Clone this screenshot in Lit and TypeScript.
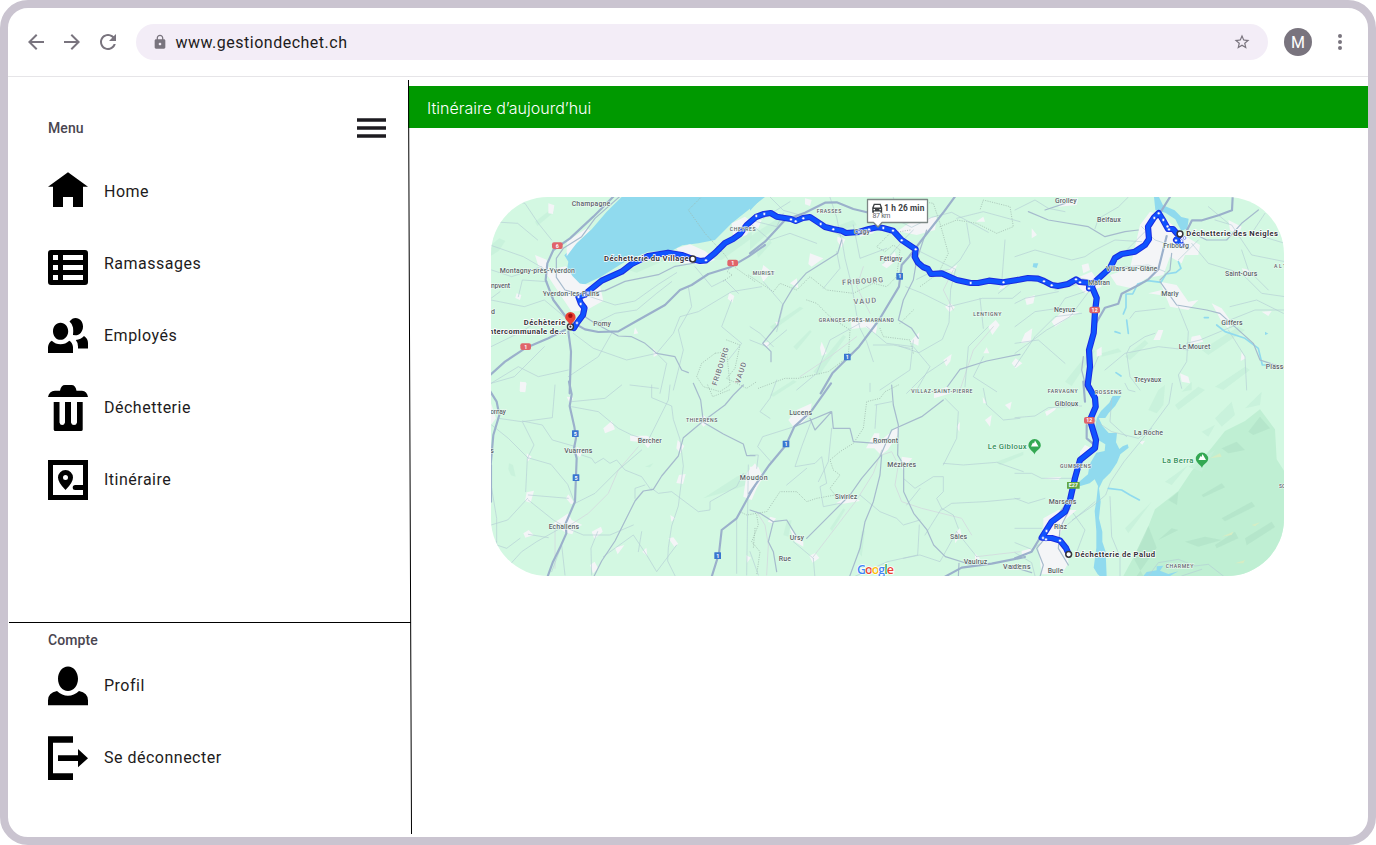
import { LitElement, html, svg, css } from "lit";
import { customElement } from "lit/decorators.js";

/* Each tile is drawn in its own 3x coordinate space, offset by (x, y). */
type Label = [number, number, number, string, string?, number?];
interface Tile {
  x: number;
  y: number;
  areas?: [string, string][];
  towns: string;
  highways?: string;
  main?: string;
  minor: string;
  faint?: string;
  borders?: string;
  streams?: string;
  labels: Label[];
  shields?: [number, number, string, string][];
}

const TILES: Tile[] = [
  {
    x: 485, y: 190,
    areas: [
      ["hill", "M18 165l25-20 18 8-20 30-23 14zM150 95l45-35 12 6-50 42zM430 240l90-42 30 8-95 42zM640 205l110-50 50-30v20l-90 65z"],
      ["water", "M840 21H410L365 65 320 118 262 172 238 196 250 215 246 240 262 262 276 280 300 283 345 262 420 215 490 185 560 182 592 166 640 160 690 150 740 100 790 60Z"],
    ],
    towns: "M190 40l18 6-4 26-14-2zM150 195l35 14 8 30 50-10 20 30 22 22 60 6 10 45-50 28-45 5-40-60-30-45-28-25zM575 175l40-12 45 20 30 26-35 15-60-5zM740 100l40-20 25 20-20 35-40 12zM733 308l15 10-6 20-14-12zM450 412l10 18-14 3zM505 475l15 18-14 8zM105 575l18 2-2 30-16-2zM95 310l14 5-4 15-14-6zM245 155l60-40 10 6-40 38-30 40z",
    highways: "M395 10L325 80 255 145 205 180 187 220 182 270 205 330 250 390 300 418 340 426 400 424 460 390 540 345 585 300 620 285 670 252 735 232 790 200 840 165M240 420L190 445 120 475 60 515 10 560M250 425l8 60-4 125",
    main: "M415 10L330 85 290 140 235 175 214 205 214 262 240 300 275 310 300 380 330 400 400 438 440 440 480 460 515 490 570 500 590 540 610 548M300 310l60-8 60-28 100-20 50-25 60-10",
    minor: "M60 25l60 15 40 60 40 50M18 95l80 5 60 50M20 145l-5 20 100 35 60 35M20 240l60 20 90-30M18 330l100 20 60-20 60 50M45 305l-27 20M300 315l90 30 60-12 70-50 55-35M330 400l60-30 65-10 60-50 45-35M150 400l-50 30-82 40M265 430l60 45 100 35 90-20 30 30-20 90M610 290l10 60-40 70 15 60-30 120M515 490l50-60 20-50 55-15 100-60 90-15M18 580l70-20 90-90M740 330l-30 80 60 50-40 50M100 320l12-50 75 5M380 430l-40 70-90 60M250 540l-90 20-60-30-82 50M630 230l50 60 40-20 40 40",
    borders: "M650 20l-40 40 50 70 60 65 20 30 70 50M745 215l-18 30 15 10-30 20M690 490l-40 30-15 40 20 30 50 15 30-20-10-100zM725 450l40 15-15 70-25 30 60 30 30-20",
    labels: [
      [260, 49, 116, "Champagne"], [44, 248, 226, "Montagny-près-Yverdon"],
      [18, 293, 57, "npvent"], [173, 318, 170, "Yverdon-les-Bains"], [18, 373, 15, "d"],
      [325, 409, 53, "Pomy"], [734, 122, 78, "CHEYRES", "caps"], [803, 256, 66, "MURIST", "caps"],
      [357, 213, 254, "Déchetterie du Village", "stop"], [116, 405, 125, "Déchèterie", "stop"],
      [12, 431, 232, "ntercommunale de...", "stop"],
      [695, 588, 118, "FRIBOURG", "region", -72], [764, 582, 66, "VAUD", "region", -72],
    ],
    shields: [[217, 167, "6", "red"], [743, 219, "1", "red"], [122, 470, "1", "red"]],
  },
  {
    x: 750, y: 190,
    areas: [["hill", "M0 140l90-60 30 4-70 50-50 45zM230 120l80-30 10 15-70 25zM20 190l40-40 5 8-40 45zM60 410l90-60 10 5-90 65zM190 545l90-110 8 5-80 115zM130 470l50-50 5 5-45 55z"], ["water", "M0 21h38L0 62z"]],
    towns: "M165 25l20 5-5 18-15-5zM0 95l35-5-10 25-25 5zM262 140l24 8-12 25-12-20zM180 190l40 15-35 25-10-8zM40 225l25 20-25 30-8-20zM120 280l20-15 5 30zM302 382l50 5 30 20-5 25-30-20-42 5zM215 455l15 35-15 8-5-25zM35 460l22-5-2 20zM75 395l14 2-8 9zM440 125l50-35 70-10-5 40-55 15-40-8zM395 225l40-40 5 25-30 25zM590 240l32-16-12 24zM585 350l16-10 14 12-16 15zM480 455l28-28-3 40zM580 510l25-18-4 22-12 15zM715 410l22-20 12 15-22 30zM700 490l10-18 8 18zM785 520l12-15 20 15-20 15zM330 120l50-12-10 22-40 10zM745 300l12-18 10 10zM678 95l22-15 5 15z",
    highways: "M0 190l45-35 60-65 60-22 60-30 35-1 50 20 50 12 60 2M622 10l-40 55-55 70-50 65-22 25-8 65-60 100-60 80-80 80-35 60",
    main: "M275 150l-12 40-95 60-40 45-30 50-15 60-45 55 25 25v30M530 120l-30 90-10 60-30 60-15 60 40 25 20 30M585 600l45-62 80-25 100-20",
    minor: "M60 21l40 40 70 20 110 60M0 90l80 20 20-40M240 22l20 60 12 60M120 35l-80 50M430 22l15 70 40 20 60-30 60-15 110 60M490 120l-30 30-60 70M620 85l80-20 110 30M650 100l10 60-30 50-30 28-60 10-40 20M497 178l120 60-15 60-5 100-20 50-70 40-60-20M597 350l-80-40-50-20M597 350l100-25 90 0 25-20M690 325l10 90M0 100l60 50 60-20 80 30M40 275l60 70-20 80M0 450l50 20 60-50M275 145l10 60 20 80 15 90 10 40 20 40 20 60M310 105l20 100 80-30M330 400l-90 50-40 100-60 50M350 410l60 50 80 10 50 60-40 70M490 450l-10 90-90 60M590 510l-60 40-60 60M715 410l-60 60-10 120M745 310l50-40M370 465h60l50 10M220 295l50-60-10-50M0 410l30 20 40 40M700 500l-30 60 70 45M765 150l-10 130",
    faint: "M340 230l-20 60 40 80M610 240l-30 60 30 60M730 410l-60 70-40 120M150 560l90-60 80-60",
    borders: "M470 75l10-45 70 10 20 60 25 90-30 60-55 40M480 120l-60 10-40 40 25 15 25-20 20 15-10 80-30 30-40-10-60 30-80-10-50-40-40 40-50-20-20 25-75-50M170 330l30 10 40 40 60 40-5 80-60 45-90 20-40 0-80 30M450 400l40-40M390 415l10 25 80 10 10 40M570 110l50-20 60 10 60 30 50-20-10-60-80-20-10 30",
    labels: [
      [200, 70, 74, "FRASSES", "caps"], [312, 132, 48, "Cugy"], [389, 213, 68, "Fétigny"],
      [8, 256, 64, "MURIST", "caps"], [206, 396, 226, "GRANGES-PRÈS-MARNAND", "caps"],
      [670, 377, 84, "LENTIGNY", "caps"], [277, 285, 123, "FRIBOURG", "region", -4],
      [311, 343, 68, "VAUD", "region", -4],
    ],
    shields: [[449, 259, "1", "blue"], [292, 501, "1", "blue"]],
  },
  {
    x: 1015, y: 190,
    areas: [
      ["hill", "M150 575l80-100 10 8-70 105zM330 500l60-50 10 10-55 50zM560 480l110-70 20 10-110 75zM260 490l50-15 10 10-60 15zM600 590l90-60 15 10-80 60z"],
      ["water", "M417 21l15 0 12 25 35 15 20 20 22 5-4 30-18 6-8-14-10-20-30-20-30-8zM55 220l15 0-5 14-12-3zM750 425l10 6-10 4z"],
    ],
    towns: "M135 25l55 0-5 20-55 5zM375 105l30-40 40 15 60 55 50 30-5 30-40 0-10 25-35-20-20 55-50 10-45 30-45-10-20-30 60-20zM435 275l50 10 35 50 30-5-30 30-55-10zM140 365l55 0-45 25-30 20-10-15zM30 430l22-15-5 40-30 5zM30 325l30-10-5 25-20 5zM590 340l30 15 25 35-5 25-20-20zM640 90l40 20-10 25-25-15zM430 420l15 0-10 30-20 0zM740 365l30-2-10 15zM530 440l25-5 10 20-40 10zM680 485l12 20-15 8zM170 270l60-25 30 45-50 20zM50 115l16 20-16 10zM200 225l20-5 5 20-20 10zM495 550l25 10 5 20-25-5zM245 480l15-10 0 25-15 5zM400 310l40-10-5 15zM680 235l25 5-10 25z",
    highways: "M465 21l-25 40M653 21l-2 40-40 15-50 15-30 0-15 30M240 405l30-52 40-12 10-30 50-25 30-18 30-30 15-60 10-40",
    main: "M515 120l60 30 60 0 45-50 50-40M435 275l50 70 90 15 40 10 100 90 20 50 60 20M470 190l-5 50-30 30M215 600l-15-60 5-40M90 60l60-20M40 65l60 25 120 20 50 30 60-15 40-5",
    minor: "M340 21l-30 30-60 35-10 30M0 60l60-30 40 25 50 10M0 200l60-20 110 30 40-10 30-20 60-30 80 5M180 260l40 10M120 300l80-20M0 410l60-45 70-10 20-30 60-20M0 530l60-90 60-60 80-10M0 340l30-15 100-20M380 110l40 40 30 10M530 160l50 60 100 30 60 60 70 10M680 180l20 60 60 60M600 90l50 15 60 90 100 20M640 100l-60-50M490 350l30 75-5 90-25 40 10 40M515 460l40-10 120-50M345 470l-10 20 10 70 30 40M345 470l45-30 30-10M345 385l15-20 90-10M645 350l80-20 80 40M620 400l100-40 90 0M640 420l50 80 5 100M225 300l-60 80-70 40-95 70M250 500l-30 70M270 540l60-50 100-20 90 10M490 210l60-60M280 235l120-10 50 20M300 215l90-90M750 70l-40 60 100 30M0 460l70-10 80 70",
    streams: "M490 215l8 20-15 12-30 5-15 25-40-5-30 10-15 30-20 0 0 40-8 20M605 405l25 20 60 20 40 30 12 50 18 0M300 425l15 5M568 383l12 0M303 548l15 10M335 390l5 40",
    labels: [
      [120, 39, 65, "Grolley"], [246, 96, 71, "Belfaux"], [445, 174, 77, "Fribourg"],
      [273, 244, 154, "Villars-sur-Glâne"], [220, 284, 65, "Matran"], [439, 317, 52, "Marly"],
      [630, 259, 97, "Saint-Ours"], [117, 365, 64, "Neyruz"], [619, 404, 64, "Giffers"],
      [491, 476, 95, "Le Mouret"], [357, 577, 82, "Treyvaux"], [752, 538, 65, "Plasse"],
      [777, 233, 50, "ALTE", "caps"], [514, 139, 275, "Déchetterie des Neigles", "stop"],
    ],
    shields: [[239, 360, "12", "red"]],
  },
  {
    x: 485, y: 385,
    areas: [["hill", "M72 235l12 5 8 35-14-4-8-18zM655 340l100-65 50-20-20 45-60 20zM480 245l25-10-10 12z"]],
    towns: "M105 -5l20 0-5 25-16-2zM355 130l25-22 10 25-30 12zM435 152l50 0 22 10-18 28-15-18-38-4zM640 105l15-15 20 20-20 15zM578 165l20 18-12 22-12-15zM582 270l20-3-8 30-20-3zM245 35l20 3-10 18zM275 185l20 10-10 22-12-10zM125 205l15 10-12 15zM125 322l22-5-10 36-17-5zM250 328l18 25-10 5-15-18zM205 415l45-30 10 20 32 15-22 8-8 20-20-5-20-15zM115 445l16-10 15 15-25 8zM320 440l28-15 5 15-25 22zM390 488l28-8-20 28zM472 500l12-12 3 25zM315 540l14-10 10 20-15 16zM550 460l15-3 15 20-12 8zM556 390l15 10-12 10zM785 265l25-30 25 40-20 35-15 35-25-10zM783 510l15 8-12 15zM18 55l15 45-15 20z",
    highways: "M252 -10l8 38-6 35 14 62 5 35-6 30 8 30-5 130-28 65 2 30-20 45-20 40-18 50M10 10l25 40 8 40-18 60-8 90M810 300l-25 45-30 55-45 35-8 70-25 80M18 240v110",
    main: "M625 -5l22 50 8 65M775 0l-30 30-25 30-65 48-60 50-15 55-50 60-25 40-30 5-25 30-60 120-40 60-25 50-15 25M655 112l60 35 60 30 10 35h25",
    minor: "M260 50l100-10 50-40M260 65l80 15 60 50 40 20 50 15 60-120 5-45M210 0l-8 98-90 12 35 70-20 40-5 100M110 110l-70-10M112 108l60 12 30 45 70 20M128 218l70 20 50 60 20 52M20 120l50 40 60 60M130 345l75 60 35 20M130 330l120 10M18 420l50-15 60-65M35 470l-60 30M270 355l60-30 70-70 70-60M290 210l30 10 10 15 25-15 20 15 20-10 25 30 50 20 28 40M500 310l20 15 40-5 80 60 35-5v-25l80-45 20-40M500 0v38l60 25 5 40 20 60 10 80-15 120-20 60-10 65-2 40 35 70M235 425l60 25h80l70-30M235 425l-80 45-45 30-50 55M130 448l60 10M320 570l-2-80 20-50M355 515l90-65 40 60 30 50 60-80M435 0l85 10M200 560l30-80 10 90M470 440l-10 60M755 405v160M790 240l-5 330M20 310l15 90v80l30 10 40-30M480 300l-30 10v30",
    faint: "M240 430l70-45 60-60 30-70 60-70M210 420v130",
    borders: "M668 0l15 35 50-20M810 430l-5 60",
    labels: [
      [16, 86, 47, "ornay"], [458, 174, 72, "Bercher"], [238, 204, 84, "Vuarrens"],
      [191, 433, 91, "Echallens"], [764, 286, 84, "Moudon"], [603, 110, 94, "THIERRENS", "caps"],
      [16, 203, 10, "s"],
    ],
    shields: [[271, 146, "5", "blue"], [273, 278, "5", "blue"], [698, 512, "1", "blue"]],
  },
  {
    x: 750, y: 385,
    areas: [["hill", "M100 450l10-40 15-5-10 50zM325 500l10-60 10-5-10 80zM60 30l70-45 10 5-70 45zM240 430l40-60 6 4-40 64zM740 230l80-30v10l-70 30z"]],
    towns: "M115 105l25-30 45-20-5 35-25 25-25 10zM348 190l25-45 15 0 0 25 60-50-5 30-30 45-20 15-20-20zM455 215l32 5-30 35zM552 20l40-15 10 20-50 15zM258 355l40-25 20 8 12 10-60 10zM60 395l18 5-10 15-14-5zM120 430l40 40 0 15-25-15zM178 512l18-8 12 15-20 14zM615 445l15-15 5 20-20 25zM705 105l20-15-5 35zM765 60l20-10-5 25zM698 35l12 20-10 0zM620 125l10-15-2 30zM675 505l15 15-15 12zM0 245l25 0 15 35-20 10-20 30z",
    highways: "M243 -5l-60 85-50 45-25 55-50 60-60 85M585 575l50-27 90-12 100-20",
    main: "M133 125l50-20 60-25M170 460l60-60 70-70 35-50 55-65 35-80 90-40 65-50M395 210l-5 60-20 80-25 60-15 80-35 95M425 0l5 60 15 60-2 90 18 30v80l30 65 40 50 20 45 35 35 80 25M0 375l30 10 40 25-15 60 15 30 10 60M180 100l15 35 50-55 5 50h50l10 40 70 5 35-15M70 410l40-5 30 50M625 575l2-40",
    minor: "M60 100l-30-20 30-40 20-55M133 125l-95 30-15 30 40 45M185 105l-30 80-20 60 60-10 20-20 15 80-20 10 10 60 50-10M245 130l-10 100-30 60M360 20l0-25M380 60l-5 70M375 60l50-10M460 280l35 30 55-35 30 0 0 45-20 20 15 30-50 80M580 235l60 5 100-8 80 28M580 240l40-80 5-80-40-40M575 370l35 20 15 40M575 375l30-20 100-5 105-10M470 360l40-50M330 330l60 50 50 20 20 20 50-15M508 420l-5 90-90 20-100 45M620 440l-50 90-60-20-50 10M620 440l60 75M190 520l-60-50M190 520l5 60M700 10l10 50 50 45 50-5M0 500l25 70M0 210l25 0-5 40M110 300l60-50",
    faint: "M190 515l130-170 50-80 25-70M395 210l30-10 20 40-10 60 20 50 60 20 120 30 30 50M680 515l130-15M20 380l25 40 10 60-5 90",
    borders: "M445 0l-40 20-15 20-40 10-10 80-30 45-40 25-30 25 10 30 20 15-30 40 15 20-55 10-30 10-30-30-50 0-40 60-60 10-20-10M20 390l5 30-20 50 25 30-10 70",
    labels: [
      [484, 24, 183, "VILLAZ-SAINT-PIERRE", "caps"], [118, 90, 68, "Lucens"],
      [369, 173, 75, "Romont"], [412, 246, 86, "Mézières"], [254, 343, 68, "Siviriez"],
      [119, 464, 43, "Ursy"], [86, 528, 37, "Rue"], [600, 461, 51, "Sâles"],
      [641, 537, 71, "Vaulruz"], [759, 551, 83, "Vuadens"], [713, 193, 117, "Le Gibloux", "peak"],
    ],
    shields: [[108, 177, "1", "blue"]],
  },
  {
    x: 1015, y: 385,
    areas: [
      ["mount", "M325 573l60-110 35-90 70-55 40-60 60-70 40-50 60-30 45-35 45 60 5 90 35 55v400z"],
      ["mount2", "M385 573l-30-55 45-95 25 65-60 85zM470 430l20 5-60 30zM620 190l45-20 25 25-50 10zM700 140l35-45 30 35-50 20zM560 330l60-35 10 12-65 30zM620 400l90-50 10 14-90 45zM510 470l60-15 50 10-70 20zM690 460l80-50 10 16-85 55zM460 345l30-25-4 40zM600 480l60-40 10 20-65 30z"],
      ["hill", "M400 75l30-60 20-15-5 60-20 25zM480 60l70-55 20 10-80 60zM600 100l50-50 10 40-40 35zM560 140l40-20-20 35zM450 290l70-50-50 60zM330 430l80-80-70 95zM690 70l50-50-5 40zM520 245l80-50-40 65zM500 20l30-30 0 25z"],
      ["sand", "M585 220l30-15 5 10zM710 420l25-8-15 12zM620 455l35-15-5 10zM660 535l30-10-5 10z"],
      ["water", "M318 33l-25 0-10 20-25 25-12 20-5 25 5 40 25 15-2 20-25 5-20 35-5 30-30 25 0 12 35-10 15-12 10 20-5 45-5 30 5 60 0 50-8 60 12 20 15 12 12-5-3-75-10-30 0-30-10-40 5-50-5-40 12-25 22-22 20-30 10-25 25-20-3-10-15 6-10 8-10-20 3-28-25 0-18-20-12-25 20 0 10-15 20-22zM385 573l10-12 30-5 0-12 20-2-10 15 25 10 30-8-25 14z"],
    ],
    towns: "M195 200l15-20 20 10-15 25-20 10zM90 80l35-15-5 10-25 18zM80 280l60-5-10 10zM85 400l45-25 55 0-35 30-20 60 30 30 0 40-20 33h-60l-10-80 15-50zM372 170l18-3-8 12zM240 15l10 0 15 10-20 12zM20 498l30-8-10 20-20 0z",
    highways: "M0 520l50-20 30-50 50-60 30-40M205 -10l5 60M215 120v40l30 25",
    main: "M90 460l-25 30 20 50-10 35M165 370l-30 60-5 60 30 50M0 548l50 15",
    minor: "M472 -5l-10 60-55 75-35 45-45 55-40 60-15 40-35 30-65 45M285 335l5 120 25 60 0 60M0 98l60-5 40-25 100-5M0 265l50 0 30 15 90 0M0 340l40 15 50-15M0 430l80 0M230 100l60 40 80 20 40-30M330 -5l10 20 20 5M400 573l30-40 60-10 50 20 40-5 45 35M60 573l-10-40-50-30M0 473l50 20 30-20M175 385l35 50-30 80M240 350l-90 75M290 40l-5 70 50 45M500 573l60-20",
    streams: "M280 310l40 5 25 15 28 15",
    labels: [
      [98, 24, 90, "FARVAGNY", "caps"], [240, 27, 79, "ROSSENS", "caps"], [119, 62, 71, "Gibloux"],
      [357, 149, 87, "La Roche"], [135, 250, 93, "GUMEFENS", "caps"], [101, 358, 83, "Marsens"],
      [117, 431, 39, "Riaz"], [98, 563, 47, "Bulle"], [452, 550, 83, "CHARMEY", "caps"],
      [-20, 551, 67, "adens"], [442, 233, 93, "La Berra", "peak"], [792, 309, 30, "SCH", "caps"],
      [180, 517, 240, "Déchetterie de Palud", "stop"],
    ],
    shields: [[223, 106, "12", "red"], [175, 301, "E27", "green"]],
  },
];

const ROUTES = [
  "570.3 326.7 574 328 577 323 583 315 584.5 308 580.7 303 578.5 297 585 294.7 588 291.7 601.7 280.7 621.7 271.7 631.7 264 648 256 668 252.7 681.7 255 692.7 259 700 261 706 260.3 715 253 725 243 733 239 740 234 746.7 225 756 217 764 214 770.7 213 776.7 216.7 791 219 795.7 221 803 218 810 217 820.7 224 825 227 833 229 841.7 230.7 846 233 859 232 869 229 877.7 227.3 883 228 893 230.7 901.7 240 915.7 249.3 914.7 256.7 918 262.7 923 267 928 269 931 274 941.7 273.3 956.7 280 970.7 283 978 283 989 280.7 1003 282.3 1020 279.5 1028 278 1038 278.7 1044 281 1051.7 285 1058 286 1068 284 1076 279.5 1080 282 1090 283 1089 288.5 1095 281.7 1110 268 1115 258 1121.7 254 1135 251.7 1145 245 1149 239 1148 226.7 1154 217.5 1158.7 213 1163 220 1168 229 1173 229 1179 236 1176 240 1181.7 245",
  "1089 287 1092 287 1096.7 298 1095 311.7 1093.7 333 1089 350 1090 366.7 1087.7 385 1095 398 1095.7 406.7 1090 420 1096 440 1095 448 1080 460 1075 478 1070 500 1065 511.7 1051.7 521.7 1041.7 537.7 1051.7 538 1060 540.5 1066 548 1068.7 554",
];

const DOTS = [
  [577, 323], [580.7, 304], [578.5, 297], [584.5, 295], [588, 293], [706, 260.3], [756.3, 216], [764.3, 214],
  [791, 219.5], [795.7, 221.3], [803.3, 218.3], [820.7, 224], [833.3, 229.3], [859, 232], [869, 229.5],
  [883.3, 228], [893, 230.7], [901.7, 240.3], [915.7, 249.3], [970.7, 283], [1003.5, 282.3],
  [1044, 281.3], [1051.7, 285.3], [1076, 279.3], [1080, 282.3], [1089, 288.5], [1154.3, 218], [1158.7, 213.3],
  [1163.3, 220], [1167.5, 226.5], [1169, 229.5], [1184.5, 238], [1176, 240.5], [1181.7, 241], [1181.7, 245],
  [1046.5, 531], [1043, 538], [1046, 539.5], [1060, 540.7],
];

const STOPS = [[692.7, 259], [1180, 234], [1068.7, 554.3]];

const NAV = [
  ["Home", "M20 17.3L40 31.8H35V52H25V42H15V52H5V31.8H0Z"],
  ["Ramassages", "M3 23H37Q40 23 40 26V55Q40 58 37 58H3Q0 58 0 55V26Q0 23 3 23ZM5 28V33H10V28ZM15 28V33H35V28ZM5 38V43H10V38ZM15 38V43H35V38ZM5 48V53H10V48ZM15 48V53H35V48Z"],
  ["Employés", "M12.5 23.7C17 23.7 20.2 27.5 20.2 32.2S17 40.8 12.5 40.8 5 37 5 32.2 8 23.7 12.5 23.7ZM0 54V48Q.5 43.5 3.8 41.7 7.500 45.300 12.500 45.300 17.500 45.300 21.300 41.700 24.500 43.500 25 48V54ZM21.500 22.500C23.500 20 25.300 19 27.500 19 32 19 35 22.800 35 27.500 35 32.800 31.500 36.300 27.300 36.300L25 36Q25.500 32 25 28.500 24 24.500 21.500 22.500ZM27.800 41Q33 40.500 36 37 40 39.500 40 44V49.600H30V47.500Q30 43.500 27.800 41Z"],
  ["Déchetterie", "M0 26Q1 20 7 19.700H12Q13 14 17 14H23.500Q27.500 14 28.500 19.700H34Q39 20 40 26ZM5.700 31H11.500V51.500Q12 54 14.200 54T17 51.500V31H23V51.500Q23.500 54 26 54T29 51.500V31H34.700V58.500Q34.700 60 33 60H7.500Q5.700 60 5.700 58.500Z"],
  ["Itinéraire", "M0 17H40V57H0ZM5 22V52H35V47H27.200A2.500 2.500 0 0 1 27.200 42H35V22ZM17.500 27A7.500 7.500 0 0 1 25 34.500Q25 39.500 17.500 47 10 39.500 10 34.500A7.500 7.500 0 0 1 17.500 27ZM17.500 32A2.500 2.500 0 1 0 17.500 37 2.500 2.500 0 1 0 17.500 32Z"],
];

const ACCOUNT = [
  ["Profil", "M20 17.400C25.600 17.400 30 22.900 30 29.700S25.600 42 20 42 10 36.500 10 29.700 14.400 17.400 20 17.400ZM0 56.300V51.500Q0 43.500 9 42 14 46.800 20 46.800T31 42Q40 43.500 40 51.500V56.300Z"],
  ["Se déconnecter", "M0 15.300H25V21.700H5V52.200H25V59H0ZM10 34.200H30V28L40 37.200 30 46.300V40H10Z"],
];

@customElement("route-map")
export class RouteMap extends LitElement {
  static styles = css`
    :host { display: block; width: 793px; height: 379px; border-radius: 57px; overflow: hidden; background: #d3f8e2; }
    svg { display: block; }
    path, polyline { fill: none; stroke-linejoin: round; stroke-linecap: round; }
    .hill { fill: #c6f0d9; opacity: .75; }
    .mount { fill: #bfefd3; }
    .mount2 { fill: #b1e2c7; opacity: .7; }
    .sand { fill: #dcecc0; opacity: .8; }
    .water { fill: #90daee; }
    .towns { fill: #f4f5f7; }
    .minor { stroke: #b4cdd4; stroke-width: 2.4; opacity: .8; }
    .faint { stroke: #d3dfdf; stroke-width: 3; }
    .main { stroke: #a6bbcd; stroke-width: 3.6; }
    .highway { stroke: #9bb0cb; stroke-width: 6.500; }
    .border { stroke: #9db8ad; stroke-width: 2.200; stroke-dasharray: 1 6; }
    .stream { stroke: #90daee; stroke-width: 5; }
    text { font-family: Roboto, "Liberation Sans", sans-serif; }
    .label { font-size: 21px; font-weight: 500; fill: #5a6267; stroke: #f1fcf6; stroke-width: 3px; paint-order: stroke; }
    .caps { font-size: 15.500px; }
    .region { font-size: 22px; fill: #6f787d; }
    .peak { font-size: 23px; fill: #2f8f56; }
    .stop { font-size: 23px; font-weight: 700; fill: #35333a; stroke: #fff; stroke-width: 4px; }
    .route-edge { stroke: #1a2be0; stroke-width: 6.200; }
    .route { stroke: #0f53ff; stroke-width: 4.200; }
    .shield { font-size: 16px; font-weight: 700; fill: #fff; text-anchor: middle; }
    .red { fill: #e0646a; } .blue { fill: #3a76cf; } .green { fill: #64a744; }
    .logo { font-family: "Open Sans", Roboto, sans-serif; font-size: 12.500px; font-weight: 600; stroke: #fff; stroke-width: 1.500px; paint-order: stroke; }
    .time { font-size: 8.300px; font-weight: 700; fill: #3c4043; }
    .km { font-size: 7px; fill: #5f6368; }
  `;

  private layer(t: Tile, body: unknown) {
    return svg`<g transform="translate(${t.x} ${t.y}) scale(.33333)">${body}</g>`;
  }

  private pin(x: number, y: number, size: number, color: string) {
    return svg`<path d="M${x} ${y}c-.6-2.700-${size}-5-${size}-${size + 3}a${size} ${size} 0 0 1 ${size * 2} 0c0 4-${size - 0.6} 5.700-${size} ${size + 3}z" style="fill:${color}"/>`;
  }

  render() {
    return html`<svg width="793" height="379" viewBox="491 197 793 379">
      ${TILES.map((t) => this.layer(t, (t.areas ?? []).map(([c, d]) => svg`<path class=${c} d=${d} />`)))}
      ${TILES.map((t) => this.layer(t, svg`
        <path class="towns" d=${t.towns} />
        <path class="border" d=${t.borders ?? ""} />
        <path class="faint" d=${t.faint ?? ""} />
        <path class="minor" d=${t.minor} />
        <path class="stream" d=${t.streams ?? ""} />
        <path class="main" d=${t.main ?? ""} />
        <path class="highway" d=${t.highways ?? ""} />`))}
      ${ROUTES.map((p) => svg`<polyline class="route-edge" points=${p} />`)}
      ${ROUTES.map((p) => svg`<polyline class="route" points=${p} />`)}
      ${TILES.map((t) => this.layer(t, svg`
        ${(t.shields ?? []).map(([x, y, s, c]) => {
          const w = c === "blue" ? 20 : c === "green" ? 38 : 32;
          return svg`<rect class=${c} x=${x - w / 2} y=${y - 10} width=${w} height="20" rx=${c === "red" ? 6 : 1} /><text class="shield" x=${x} y=${y + 6}>${s}</text>`;
        })}
        ${t.labels.map(([x, y, w, s, c, r]) => svg`<text class="label ${c ?? ""}" x=${x} y=${y} textLength=${w} transform="rotate(${r ?? 0} ${x} ${y})">${s}</text>`)}`))}
      ${DOTS.map(([x, y]) => svg`<circle cx=${x} cy=${y} r="1.400" fill="#fff" stroke="#1a40e8" stroke-width=".5" />`)}
      ${STOPS.map(([x, y]) => svg`<circle cx=${x} cy=${y} r="2.900" fill="#fff" stroke="#35333a" stroke-width="1.500" />`)}
      <circle cx="570.400" cy="326.700" r="3" fill="#fff" stroke="#35333a" stroke-width="1.400" />
      <circle cx="570.400" cy="326.700" r="1.100" fill="#35333a" />
      ${this.pin(570.4, 325.5, 5.2, "#ea4335")}
      <circle cx="570.400" cy="315.800" r="2.200" fill="#a50e0e" />
      ${this.pin(1034.600, 454.500, 6.200, "#34a853")}
      <path d="M1031 446.500l2-4 1 1 1-3 3.500 6z" style="fill:#fff" />
      ${this.pin(1202, 468, 6.200, "#34a853")}
      <path d="M1198.500 460l2-4 1 1 1-3 3.500 6z" style="fill:#fff" />
      <path d="M867.500 199.500H927.500V222.500H882L878 227 873.500 222.500H867.500Z" style="fill:#fff;stroke:#7d8785;stroke-width:1.300" />
      <path d="M873.800 203.800h6.800l1.600 4v5h-1.800v-1.300h-6.400v1.300h-1.800v-5zM874.700 205l-.9 2.500h6.800l-.9-2.500zM873.500 209v1.300h1.500V209zm5.900 0v1.300h1.500V209z" style="fill:#3c4043;fill-rule:evenodd" />
      <text class="time" x="884.300" y="210.700" textLength="40">1 h 26 min</text>
      <text class="km" x="872.500" y="218.300" textLength="18">87 km</text>
      <text class="logo" x="857" y="573.500" textLength="37"><tspan fill="#4285f4">G</tspan><tspan fill="#ea4335">o</tspan><tspan fill="#fbbc05">o</tspan><tspan fill="#4285f4">g</tspan><tspan fill="#34a853">l</tspan><tspan fill="#ea4335">e</tspan></text>
    </svg>`;
  }
}

@customElement("app-root")
export class AppRoot extends LitElement {
  static styles = css`
    :host { display: block; background: #fff; font-family: Roboto, "Liberation Sans", sans-serif; color: #1d1b20; }
    .window { box-sizing: border-box; width: 1376px; height: 845px; border: 8px solid #cac4d0; border-radius: 28px; background: #fff; overflow: hidden; display: flex; flex-direction: column; }
    .toolbar { height: 68px; flex: none; display: flex; align-items: center; padding: 0 16px; border-bottom: 1px solid #e6e5e8; fill: #79747e; }
    .tool { width: 24px; height: 24px; margin-right: 12px; }
    .address { flex: 1; height: 36px; margin-left: 4px; padding: 0 17px 0 15.500px; border-radius: 18px; background: #f3edf7; display: flex; align-items: center; font-size: 16px; letter-spacing: .5px; }
    .toolbar .tool:first-child { margin-left: 0; }
    .lock { width: 16px; height: 16px; margin-right: 8px; }
    .url { flex: 1; }
    .star { width: 18px; height: 18px; }
    .avatar { width: 28px; height: 28px; margin: 0 16px; border-radius: 50%; background: #79747e; color: #fff; display: flex; align-items: center; justify-content: center; font-size: 16px; }
    .more { width: 24px; height: 24px; }
    .content { flex: 1; display: flex; min-height: 0; position: relative; }
    .sidebar { width: 400px; flex: none; display: flex; flex-direction: column; }
    .section { padding: 24px 22px 0 40px; }
    .primary { height: 521px; }
    .account { border-top: 1px solid #000; margin: 0 -3px 0 1px; padding: 8px 22px 0 39px; }
    .heading { height: 54px; display: flex; align-items: center; justify-content: space-between; font-size: 14px; font-weight: 500; letter-spacing: .1px; color: #49454f; }
    .account .heading { height: 18px; }
    .burger { width: 29px; height: 20px; fill: #1d1b20; }
    .item { height: 72px; display: flex; align-items: center; gap: 16px; font-size: 16px; letter-spacing: .5px; }
    .icon { width: 40px; height: 72px; flex: none; fill: #000; fill-rule: evenodd; }
    .main { flex: 1; padding-top: 9px; }
    .title { height: 42px; padding: 1px 0 0 19px; box-sizing: border-box; background: #090; color: #fff; display: flex; align-items: center; font: 300 16px Inter, "Liberation Sans", sans-serif; }
    .map { margin: 69px 0 0 83px; }
    .rule { position: absolute; left: 398px; top: 3px; width: 8px; height: 754px; }
  `;

  private items(list: string[][]) {
    return list.map(([name, d]) => html`<div class="item">
      <svg class="icon" viewBox="0 0 40 72"><path d=${d} /></svg><span>${name}</span>
    </div>`);
  }

  render() {
    return html`<div class="window">
      <div class="toolbar">
        <svg class="tool" viewBox="0 0 24 24"><path d="M20 11H7.830l5.590-5.590L12 4l-8 8 8 8 1.410-1.410L7.830 13H20z" /></svg>
        <svg class="tool" viewBox="0 0 24 24"><path d="M12 4l-1.410 1.410L16.170 11H4v2h12.170l-5.580 5.590L12 20l8-8z" /></svg>
        <svg class="tool" viewBox="0 0 24 24"><path d="M17.650 6.350C16.200 4.900 14.210 4 12 4c-4.420 0-7.990 3.580-7.990 8s3.570 8 7.990 8c3.730 0 6.840-2.550 7.730-6h-2.080c-.82 2.330-3.040 4-5.650 4-3.310 0-6-2.690-6-6s2.690-6 6-6c1.660 0 3.140.69 4.220 1.780L13 11h7V4z" /></svg>
        <div class="address">
          <svg class="lock" viewBox="0 0 24 24"><path d="M18 8h-1V6c0-2.760-2.240-5-5-5S7 3.240 7 6v2H6c-1.100 0-2 .9-2 2v10c0 1.100.9 2 2 2h12c1.100 0 2-.9 2-2V10c0-1.100-.9-2-2-2zm-6 9c-1.100 0-2-.9-2-2s.9-2 2-2 2 .9 2 2-.9 2-2 2zm3.100-9H8.900V6c0-1.710 1.390-3.100 3.100-3.100s3.100 1.390 3.100 3.100z" /></svg>
          <span class="url">www.gestiondechet.ch</span>
          <svg class="star" viewBox="0 0 24 24"><path d="M22 9.240l-7.190-.62L12 2 9.190 8.630 2 9.240l5.460 4.730L5.820 21 12 17.270 18.180 21l-1.630-7.030zM12 15.400l-3.760 2.270 1-4.280-3.320-2.880 4.380-.38L12 6.100l1.710 4.040 4.380.38-3.320 2.880 1 4.280z" /></svg>
        </div>
        <div class="avatar">M</div>
        <svg class="more" viewBox="0 0 24 24"><circle cx="12" cy="6" r="2" /><circle cx="12" cy="12" r="2" /><circle cx="12" cy="18" r="2" /></svg>
      </div>
      <div class="content">
        <div class="sidebar">
          <div class="section primary">
            <div class="heading"><span>Menu</span>
              <svg class="burger" viewBox="0 0 29 20"><path d="M0 .3h29v3.400H0zM0 8.300h29v3.400H0zM0 16.300h29v3.400H0z" /></svg>
            </div>
            ${this.items(NAV)}
          </div>
          <div class="section account">
            <div class="heading"><span>Compte</span></div>
            ${this.items(ACCOUNT)}
          </div>
        </div>
        <div class="main">
          <div class="title">Itinéraire d’aujourd’hui</div>
          <route-map class="map"></route-map>
        </div>
        <svg class="rule" viewBox="0 0 8 754"><path d="M2.500 0L5.500 754" stroke="#000" fill="none" /></svg>
      </div>
    </div>`;
  }
}
